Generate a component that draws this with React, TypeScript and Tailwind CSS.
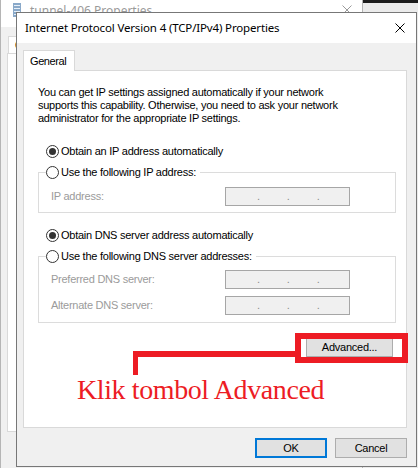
import React from "react";

const Radio = ({ checked }: { checked?: boolean }) => (
  <span className="flex h-[13px] w-[13px] shrink-0 items-center justify-center rounded-full border border-[#333333] bg-white">
    {checked && <span className="h-[7px] w-[7px] rounded-full bg-[#333333]" />}
  </span>
);

const IpBox = () => (
  <div className="flex h-[19px] w-[125px] items-center gap-[27px] border border-[#a6a6a6] bg-[#f0f0f0] pl-[31px] text-[#8c8c8c]">
    <span>.</span>
    <span>.</span>
    <span>.</span>
  </div>
);

const Button = ({ label, primary, className = "" }: { label: string; primary?: boolean; className?: string }) => (
  <div
    className={`flex h-[20px] items-center justify-center bg-[#e1e1e1] ${
      primary ? "border-2 border-[#0078d7]" : "border border-[#adadad]"
    } ${className}`}
  >
    {label}
  </div>
);

const App = () => {
  return (
    <div className="relative h-[468px] w-[418px] overflow-hidden bg-[#ebebeb] font-['Liberation_Sans',Arial,sans-serif] text-[11px] tracking-[-0.25px] text-black">
      {/* window behind */}
      <div className="absolute left-0 top-0 flex h-[468px] w-[363px] flex-col border-x border-[#b5b5b5] bg-[#f0f0f0]">
        <div className="flex h-[27px] items-start justify-between bg-white pl-[12px] pr-[10px]">
          <div className="flex items-start gap-[9px] pt-[3px]">
            <svg width="8" height="14" viewBox="0 0 8 14">
              <rect x="0" y="0" width="8" height="14" fill="#8aa9c9" />
              <rect x="1" y="2" width="6" height="1" fill="#e8f0f8" />
              <rect x="1" y="5" width="6" height="1" fill="#e8f0f8" />
              <rect x="1" y="8" width="6" height="1" fill="#e8f0f8" />
              <rect x="1" y="11" width="6" height="1" fill="#e8f0f8" />
            </svg>
            <span className="font-['Noto_Sans',sans-serif] text-[12px] leading-[16px] tracking-normal text-[#9a9a9a]">
              tunnel-406 Properties
            </span>
          </div>
          <svg width="10" height="10" viewBox="0 0 10 10" className="mt-[5px]">
            <path d="M0.5 0.5 L9.5 9.5 M9.5 0.5 L0.5 9.5" stroke="#9a9a9a" strokeWidth="1" />
          </svg>
        </div>
        <div className="ml-[7px] mt-[9px] h-[17px] w-[50px] border border-b-0 border-[#d9d9d9] bg-white pl-[6px] leading-[16px]">
          General
        </div>
        <div className="ml-[6px] h-[379px] border border-[#d9d9d9] bg-white" />
      </div>

      {/* TCP/IPv4 dialog */}
      <div className="absolute left-[16px] top-[12px] flex h-[455px] w-[401px] flex-col border border-[#777777] bg-[#f0f0f0]">
        <div className="flex h-[30px] shrink-0 items-center justify-between bg-white pl-[8px] pr-[11px]">
          <span className="font-['Noto_Sans',sans-serif] text-[11.5px] tracking-[-0.15px]">
            Internet Protocol Version 4 (TCP/IPv4) Properties
          </span>
          <svg width="10" height="10" viewBox="0 0 10 10">
            <path d="M0.5 0.5 L9.5 9.5 M9.5 0.5 L0.5 9.5" stroke="#000" strokeWidth="1" />
          </svg>
        </div>

        <div className="flex flex-1 flex-col pl-[6px] pr-[9px] pt-[7px]">
          <div className="relative z-10 -mb-px flex h-[21px] w-[52px] items-center border border-b-0 border-[#d9d9d9] bg-white pl-[6px] tracking-[-0.4px]">
            General
          </div>

          <div className="flex h-[358px] flex-col border border-[#d9d9d9] bg-white">
            <p className="pl-[14px] pt-[15px] leading-[13px]">
              You can get IP settings assigned automatically if your network
              <br />
              supports this capability. Otherwise, you need to ask your network
              <br />
              administrator for the appropriate IP settings.
            </p>

            <div className="mt-[19px] flex h-[14px] items-center gap-[2px] pl-[22px]">
              <Radio checked />
              <span>Obtain an IP address automatically</span>
            </div>

            <fieldset className="ml-[14px] mt-[7px] w-[358px] border border-[#dcdcdc] pb-[6px]">
              <legend className="ml-[7px] flex h-[14px] items-center gap-[2px] pr-[4px]">
                <Radio />
                <span>Use the following IP address:</span>
              </legend>
              <div className="flex items-center pl-[12px] pt-[8px]">
                <span className="w-[174px] text-[#9b9b9b]">IP address:</span>
                <IpBox />
              </div>
            </fieldset>

            <div className="mt-[15px] flex h-[14px] items-center gap-[2px] pl-[22px]">
              <Radio checked />
              <span>Obtain DNS server address automatically</span>
            </div>

            <fieldset className="ml-[14px] mt-[7px] w-[358px] border border-[#dcdcdc] pb-[7px]">
              <legend className="ml-[7px] flex h-[14px] items-center gap-[2px] pr-[4px]">
                <Radio />
                <span>Use the following DNS server addresses:</span>
              </legend>
              <div className="flex flex-col gap-[7px] pl-[12px] pt-[7px]">
                <div className="flex items-center">
                  <span className="w-[174px] text-[#9b9b9b]">Preferred DNS server:</span>
                  <IpBox />
                </div>
                <div className="flex items-center">
                  <span className="w-[174px] text-[#9b9b9b]">Alternate DNS server:</span>
                  <IpBox />
                </div>
              </div>
            </fieldset>

            <Button label="Advanced..." className="mr-[13px] mt-[14px] w-[87px] self-end" />

            <p className="mt-[19px] pl-[53px] font-['Liberation_Serif','Times_New_Roman',serif] text-[28px] leading-[28px] tracking-[-0.4px] text-[#ed1c24]">
              Klik tombol Advanced
            </p>
          </div>

          <div className="mt-[10px] flex justify-end gap-[8px]">
            <Button label="OK" primary className="w-[72px]" />
            <Button label="Cancel" className="w-[72px]" />
          </div>
        </div>
      </div>

      {/* red annotation */}
      <div className="absolute right-0 top-0 h-[3px] w-[55px] bg-[#1c1c1c]" />
      <div className="absolute left-[295px] top-[333px] h-[30px] w-[113px] border-[6px] border-[#ed1c24]" />
      <div className="absolute left-[133px] top-[351px] h-[6px] w-[163px] bg-[#ed1c24]" />
      <div className="absolute left-[133px] top-[351px] h-[24px] w-[5px] bg-[#ed1c24]" />
    </div>
  );
};

export default App;
